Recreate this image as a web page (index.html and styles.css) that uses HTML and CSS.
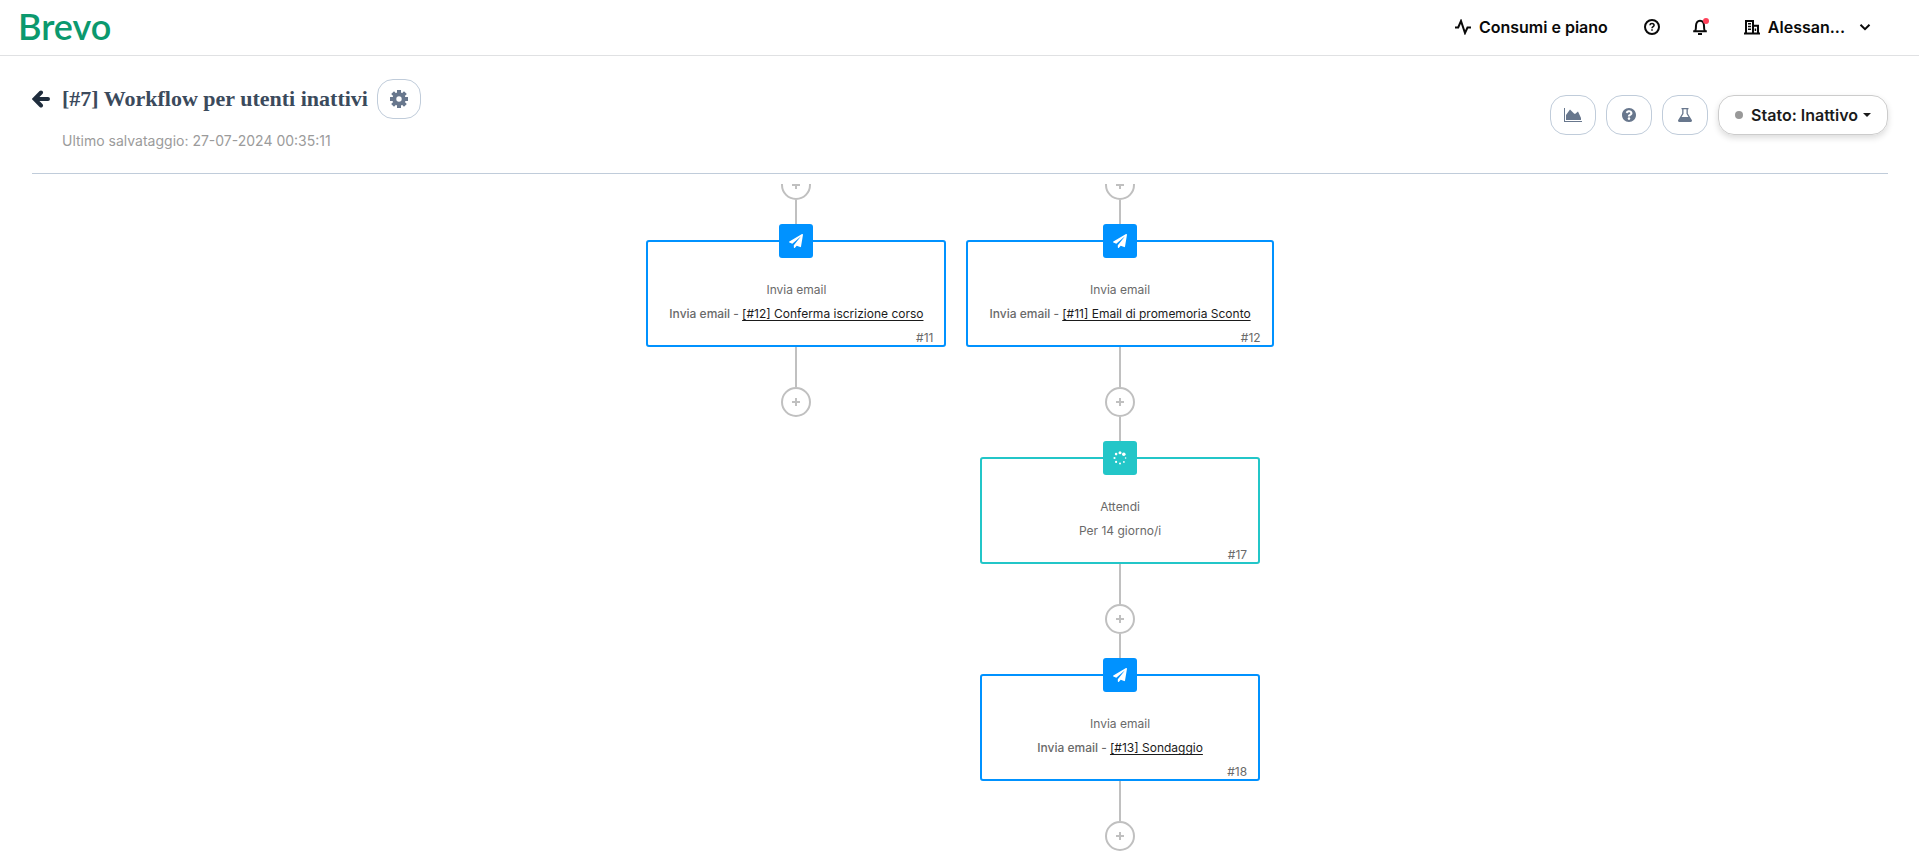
FILE: index.html
```html
<!DOCTYPE html>
<html lang="it">
<head>
<meta charset="utf-8">
<title>Brevo - Workflow per utenti inattivi</title>
<link rel="stylesheet" href="styles.css">
</head>
<body>
<svg class="sprite" aria-hidden="true">
  <symbol id="plane" viewBox="0 0 512 512"><path d="M476 3.2L12.5 270.6c-18.1 10.4-15.8 35.6 2.2 43.2L121 358.4l287.3-253.2c5.5-4.9 13.3 2.6 8.6 8.3L176 407v80.5c0 23.6 28.5 32.9 42.5 15.8L282 426l124.6 52.2c14.2 6 30.4-2.9 33-18.2l72-432C515 7.8 493.3-6.8 476 3.2z"/></symbol>
  <symbol id="plus" viewBox="0 0 8 8"><path d="M3 0h2v3h3v2H5v3H3V5H0V3h3z"/></symbol>
</svg>

<header class="topbar">
  <a class="logo" href="#">Brevo</a>
  <nav class="topnav">
    <a class="navitem" href="#">
      <svg class="icon16 line" viewBox="0 0 16 16"><path d="M0 8.500h3.200L6 2l4 12 2.500-5.500H16"/></svg>
      Consumi e piano
    </a>
    <button class="iconbtn" aria-label="Aiuto">
      <svg class="icon16 line" viewBox="0 0 16 16"><circle cx="8" cy="8" r="7"/><path class="thin" d="M5.900 6.300C6 5 7 4.500 8 4.500s2.100.6 2.100 1.800S8 7.600 8 9.200M8 10.300v1.500"/></svg>
    </button>
    <button class="iconbtn bell" aria-label="Notifiche">
      <svg class="icon16 line" viewBox="0 0 16 16"><path d="M1.200 12.200h13.600M3.200 12C4 10.500 4 9 4 6.800 4 3.500 5.600 1.800 8 1.800s4 1.700 4 5c0 2.200 0 3.700.8 5.200"/><path d="M6 15h4"/></svg>
      <span class="dot"></span>
    </button>
    <button class="account">
      <svg class="icon16 line" viewBox="0 0 16 16"><path d="M0 14.500h16M2 14.500V2h7v12.500M9 6.800h5v7.700"/><path class="thin" d="M4 4.800h3M4 7.500h3M4 10.200h3M11.400 9.500v2.600"/></svg>
      <span>Alessan...</span>
      <svg class="chevron line" viewBox="0 0 12 12"><path d="M1.500 3.800L6 8.200l4.500-4.400"/></svg>
    </button>
  </nav>
</header>

<main class="page">
  <section class="heading">
    <div class="headinfo">
      <div class="titlerow">
        <a class="back" href="#" aria-label="Indietro"><svg viewBox="0 0 18 18"><path d="M16 9H3M9 2.500L2.500 9 9 15.500"/></svg></a>
        <h1>[#7] Workflow per utenti inattivi</h1>
        <button class="pill gear" aria-label="Impostazioni">
          <svg viewBox="0 0 18 18"><circle cx="9" cy="9" r="4.700" class="ring"/><path class="teeth" d="M9 0v3M9 15v3M0 9h3M15 9h3M2.600 2.600l2.200 2.200M13.200 13.200l2.200 2.200M2.600 15.400l2.200-2.200M13.200 4.800l2.200-2.200"/></svg>
        </button>
      </div>
      <p class="saved">Ultimo salvataggio: 27-07-2024 00:35:11</p>
    </div>
    <div class="tools">
      <button class="pill" aria-label="Statistiche"><svg class="chart" viewBox="0 0 18 14"><path d="M0 0h1v13h17v1H0zM2 12V7l4-5.500 4 4 1 .5 3-2.500L17 10v2z"/></svg></button>
      <button class="pill" aria-label="Guida"><svg class="question" viewBox="8 8 496 496"><path d="M504 256c0 136.997-111.043 248-248 248S8 392.997 8 256C8 119.083 119.043 8 256 8s248 111.083 248 248zM262.655 90c-54.497 0-89.255 22.957-116.549 63.758-3.536 5.286-2.353 12.415 2.715 16.258l34.699 26.310c5.205 3.947 12.621 3.008 16.665-2.122 17.864-22.658 30.113-35.797 57.303-35.797 20.429 0 45.698 13.148 45.698 32.958 0 14.976-12.363 22.667-32.534 33.976C247.128 238.528 216 254.941 216 296v4c0 6.627 5.373 12 12 12h56c6.627 0 12-5.373 12-12v-1.333c0-28.462 83.186-29.647 83.186-106.667 0-58.002-60.165-102-116.531-102zM256 338c-25.365 0-46 20.635-46 46 0 25.364 20.635 46 46 46s46-20.636 46-46c0-25.365-20.635-46-46-46z"/></svg></button>
      <button class="pill" aria-label="Test"><svg class="flask" viewBox="0 0 14 14"><path fill-rule="evenodd" d="M3.500 0h7v1.200H9.800v4.300l4 6.500c.5 1.200 0 2-1 2H1.200c-1 0-1.500-.8-1-2l4-6.500V1.200h-.7zM5.500 1.200v4.600L3.500 9h7l-2-3.200V1.200z"/></svg></button>
      <button class="pill status"><span class="statusdot"></span>Stato: Inattivo<span class="caret"></span></button>
    </div>
  </section>

  <section class="canvas">
    <div class="branch">
      <button class="add" aria-label="Aggiungi"><svg><use href="#plus"/></svg></button>
      <span class="wire"></span>
      <article class="card email">
        <span class="badge"><svg><use href="#plane"/></svg></span>
        <h2>Invia email</h2>
        <p><b>Invia email - </b><a href="#">[#12] Conferma iscrizione corso</a></p>
        <small>#11</small>
      </article>
      <span class="wire"></span>
      <button class="add" aria-label="Aggiungi"><svg><use href="#plus"/></svg></button>
    </div>
    <div class="branch">
      <button class="add" aria-label="Aggiungi"><svg><use href="#plus"/></svg></button>
      <span class="wire"></span>
      <article class="card email">
        <span class="badge"><svg><use href="#plane"/></svg></span>
        <h2>Invia email</h2>
        <p><b>Invia email - </b><a href="#">[#11] Email di promemoria Sconto</a></p>
        <small>#12</small>
      </article>
      <span class="wire"></span>
      <button class="add" aria-label="Aggiungi"><svg><use href="#plus"/></svg></button>
      <span class="wire"></span>
      <article class="card wait">
        <span class="badge"><svg viewBox="0 0 14 14"><circle cx="7" cy="1.700" r="1.500"/><circle cx="10.800" cy="3.200" r="1.800"/><circle cx="12.600" cy="7" r=".8"/><circle cx="10.900" cy="10.900" r=".9"/><circle cx="7" cy="12.500" r="1"/><circle cx="3.100" cy="10.900" r="1.100"/><circle cx="1.500" cy="7" r="1.100"/><circle cx="3.100" cy="3.100" r="1.300"/></svg></span>
        <h2>Attendi</h2>
        <p>Per 14 giorno/i</p>
        <small>#17</small>
      </article>
      <span class="wire"></span>
      <button class="add" aria-label="Aggiungi"><svg><use href="#plus"/></svg></button>
      <span class="wire"></span>
      <article class="card email">
        <span class="badge"><svg><use href="#plane"/></svg></span>
        <h2>Invia email</h2>
        <p><b>Invia email - </b><a href="#">[#13] Sondaggio</a></p>
        <small>#18</small>
      </article>
      <span class="wire"></span>
      <button class="add" aria-label="Aggiungi"><svg><use href="#plus"/></svg></button>
    </div>
  </section>
</main>
</body>
</html>
```
FILE: styles.css
```css
* { box-sizing: border-box; }
body {
  margin: 0;
  min-height: 100vh;
  display: flex;
  flex-direction: column;
  background: #fff;
  font-family: Inter, "Liberation Sans", sans-serif;
  font-size: 12px;
  color: #6a6a6a;
}
.sprite { display: none; }
svg { display: block; }
button { font: inherit; color: inherit; background: none; border: 0; padding: 0; cursor: pointer; }
a { color: inherit; text-decoration: none; }
h1, h2, p { margin: 0; font-weight: 400; }

.topbar {
  display: flex;
  align-items: center;
  justify-content: space-between;
  height: 56px;
  padding: 0 48px 2px 18px;
  border-bottom: 1px solid #e0e1e3;
}
.logo { padding-bottom: 2px; font-family: Lato, sans-serif; font-size: 36px; line-height: 48px; font-weight: 600; color: #0b996e; }
.topnav { display: flex; align-items: center; font-size: 16px; line-height: 24px; font-weight: 600; color: #0a0a0a; }
.navitem, .account { display: flex; align-items: center; gap: 8px; }
.icon16 { width: 16px; height: 16px; }
.line { fill: none; stroke: #0a0a0a; stroke-width: 2; }
.thin { stroke-width: 1.500; }
.iconbtn { margin-left: 36px; }
.bell { position: relative; margin-left: 32px; }
.dot { position: absolute; top: -1px; right: -1px; width: 6px; height: 6px; border-radius: 50%; background: #ff4059; }
.account { margin-left: 36px; }
.chevron { width: 12px; height: 12px; margin-left: 6px; }

.page { flex: 1; display: flex; flex-direction: column; padding: 0 31px 0 32px; }
.heading {
  display: flex;
  align-items: center;
  justify-content: space-between;
  padding: 23px 0;
  border-bottom: 1px solid #c0ccda;
}
.titlerow { display: flex; align-items: center; }
.back { width: 30px; }
.back svg { width: 18px; height: 18px; fill: none; stroke: #1f2d3d; stroke-width: 4; stroke-linecap: round; }
h1 { font-family: "Liberation Serif", serif; font-size: 22px; line-height: 30px; font-weight: 700; color: #3b4a5c; }
.pill {
  display: flex;
  align-items: center;
  justify-content: center;
  width: 46px;
  height: 40px;
  border: 1px solid #c0ccda;
  border-radius: 16px;
  color: #68778d;
}
.pill svg { fill: currentColor; }
.gear { width: 44px; margin-left: 9px; }
.gear svg { width: 18px; height: 18px; }
.pill .ring { fill: none; stroke: currentColor; stroke-width: 4; }
.teeth { stroke: currentColor; stroke-width: 4; }
.saved { padding: 12px 0 0 30px; font-size: 14px; line-height: 19px; color: #9b9b9b; }
.tools { display: flex; gap: 10px; }
.chart { width: 18px; height: 14px; }
.question { width: 14px; height: 14px; }
.flask { width: 14px; height: 14px; }
.status {
  width: auto;
  padding: 0 16px;
  border-color: #ccc;
  font-size: 16px;
  font-weight: 600;
  color: #1b1b1b;
  box-shadow: 0 3px 6px rgba(0, 0, 0, .14);
}
.statusdot { width: 8px; height: 8px; margin-right: 8px; border-radius: 50%; background: #999; }
.caret { margin-left: 5px; border: 4px solid transparent; border-top-color: #1b1b1b; border-bottom: 0; }

.canvas {
  flex: 1;
  display: flex;
  justify-content: center;
  align-items: flex-start;
  gap: 20px;
  margin-top: 10px;
  overflow: hidden;
}
.branch { display: flex; flex-direction: column; align-items: center; margin-top: -14px; }
.add {
  display: flex;
  align-items: center;
  justify-content: center;
  width: 30px;
  height: 30px;
  border: 2px solid #c0c0c0;
  border-radius: 50%;
  fill: #c0c0c0;
}
.add svg { width: 8px; height: 8px; }
.wire { width: 2px; height: 40px; background: #c0c0c0; }
.card {
  position: relative;
  min-width: 280px;
  padding: 36px 21px 0;
  border: 2px solid;
  border-radius: 3px;
  text-align: center;
  line-height: 24px;
}
.card > * { display: block; }
.card h2, .card p { font-size: 12px; line-height: 24px; color: #6a6a6a; }
.card b { font-weight: 500; }
.card a { color: #1b1b1b; text-decoration: underline; text-underline-offset: 2px; text-decoration-skip-ink: none; }
.card small { margin-right: -10px; padding-top: 4px; font-size: 12px; line-height: 15px; text-align: right; }
.card .badge {
  position: absolute;
  top: -18px;
  left: 50%;
  margin-left: -17px;
  display: flex;
  align-items: center;
  justify-content: center;
  width: 34px;
  height: 34px;
  border-radius: 3px;
  fill: #fff;
}
.badge svg { width: 14px; height: 14px; }
.email { border-color: #0092ff; }
.email .badge { background: #0092ff; }
.wait { border-color: #23c6c8; }
.wait .badge { background: #23c6c8; }
```
